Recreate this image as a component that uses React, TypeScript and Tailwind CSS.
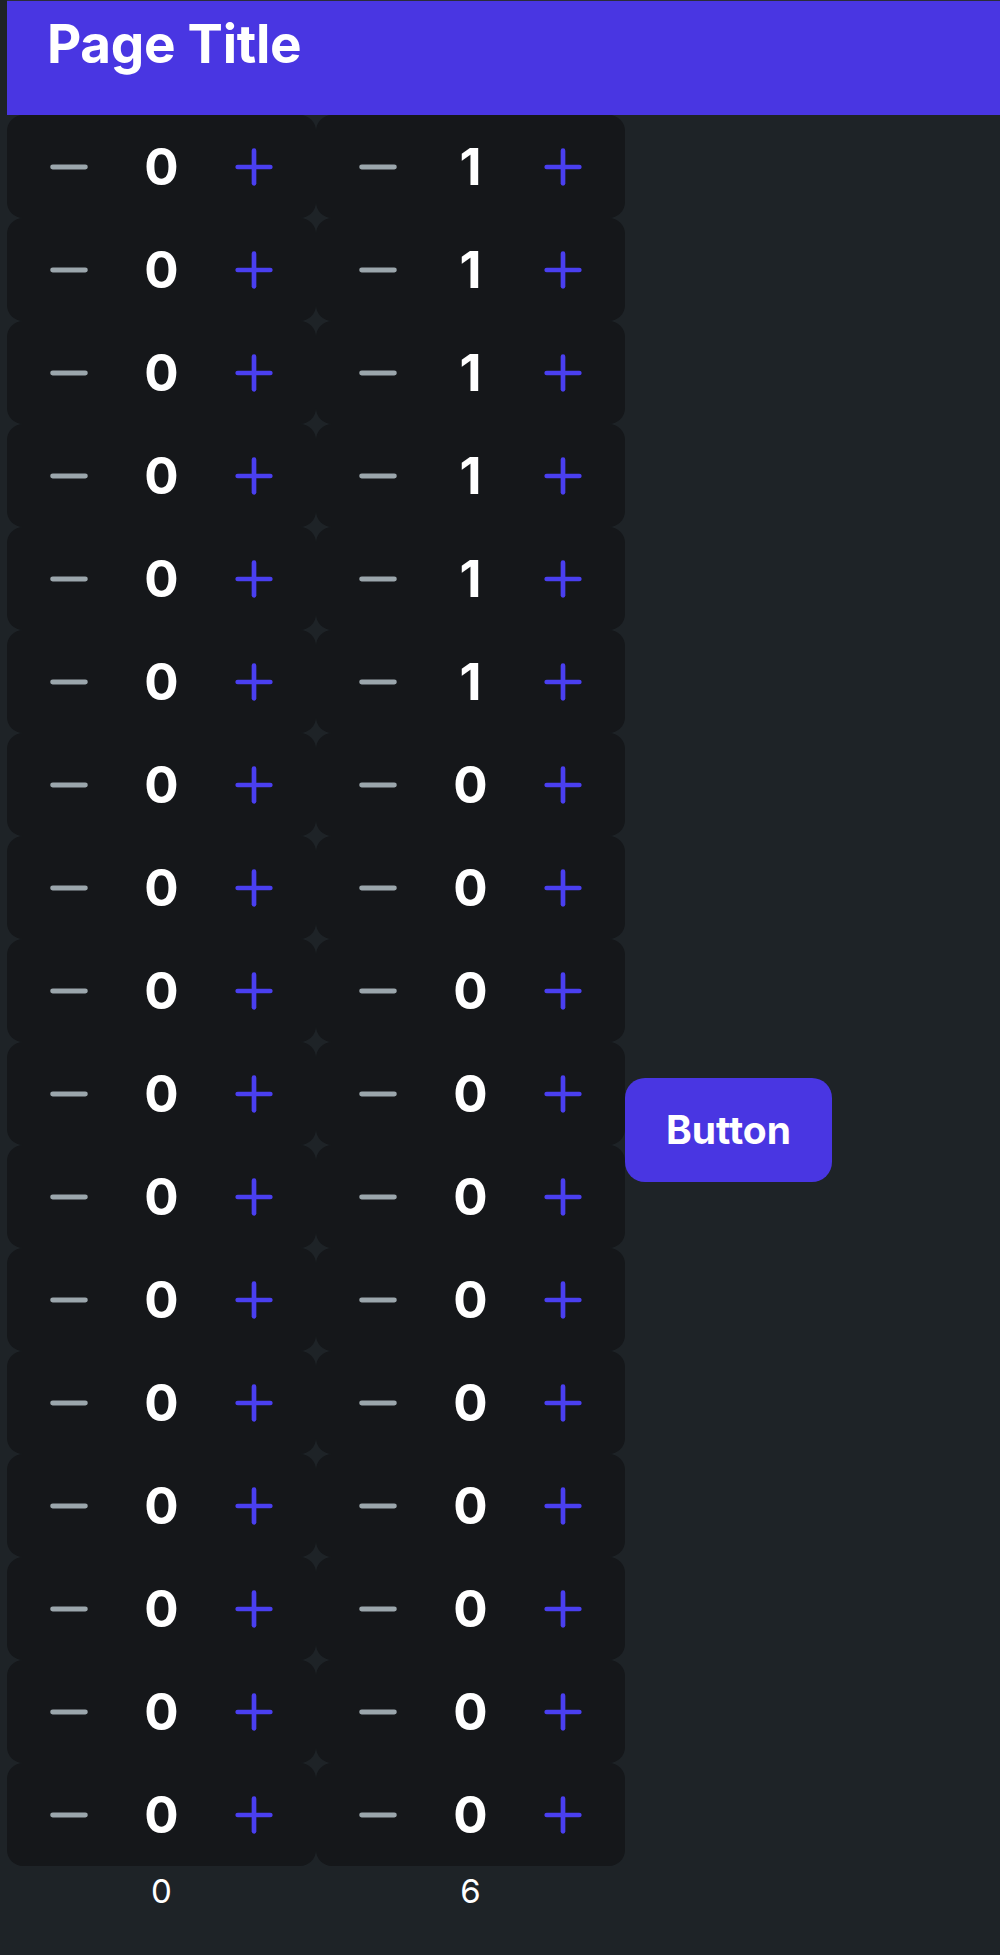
import React from "react";
import { Minus, Plus } from "lucide-react";

const col1 = Array.from({ length: 17 }, () => 0);
const col2 = Array.from({ length: 17 }, (_, i) => (i < 6 ? 1 : 0));

function Counter({ value }: { value: number }) {
  return (
    <div className="flex h-[103px] w-[309px] items-center justify-between rounded-2xl bg-[#15171a] px-[34px]">
      <button className="flex h-[56px] w-[56px] items-center justify-center text-[#9ba6ac]">
        <Minus size={56} strokeWidth={2.1} />
      </button>
      <span className="flex-1 text-center text-[51px] font-bold leading-none text-white">{value}</span>
      <button className="flex h-[56px] w-[56px] items-center justify-center text-[#4a3ff0]">
        <Plus size={56} strokeWidth={2} />
      </button>
    </div>
  );
}

function Column({ values }: { values: number[] }) {
  const total = values.reduce((a, b) => a + b, 0);
  return (
    <div className="flex w-[309px] flex-col">
      {values.map((v, i) => (
        <Counter key={i} value={v} />
      ))}
      <div className="mt-[9px] text-center text-[33px] leading-none text-white">{total}</div>
    </div>
  );
}

export default function App() {
  return (
    <div
      className="min-h-[1955px] w-[1000px] bg-[#1e2327] pl-[7px]"
      style={{ fontFamily: "Inter, 'Noto Sans', sans-serif" }}
    >
      <header className="h-[115px] border-t border-[#2b2d3a] bg-[#4936e2] pl-[40px] pt-[17px]">
        <h1 className="text-[53px] font-bold leading-none tracking-[-0.3px] text-white">Page Title</h1>
      </header>
      <div className="flex items-start">
        <Column values={col1} />
        <Column values={col2} />
        <button className="mt-[963px] flex h-[104px] w-[207px] items-center justify-center rounded-[20px] bg-[#4936e2] text-[39px] font-bold text-white">
          Button
        </button>
      </div>
    </div>
  );
}
